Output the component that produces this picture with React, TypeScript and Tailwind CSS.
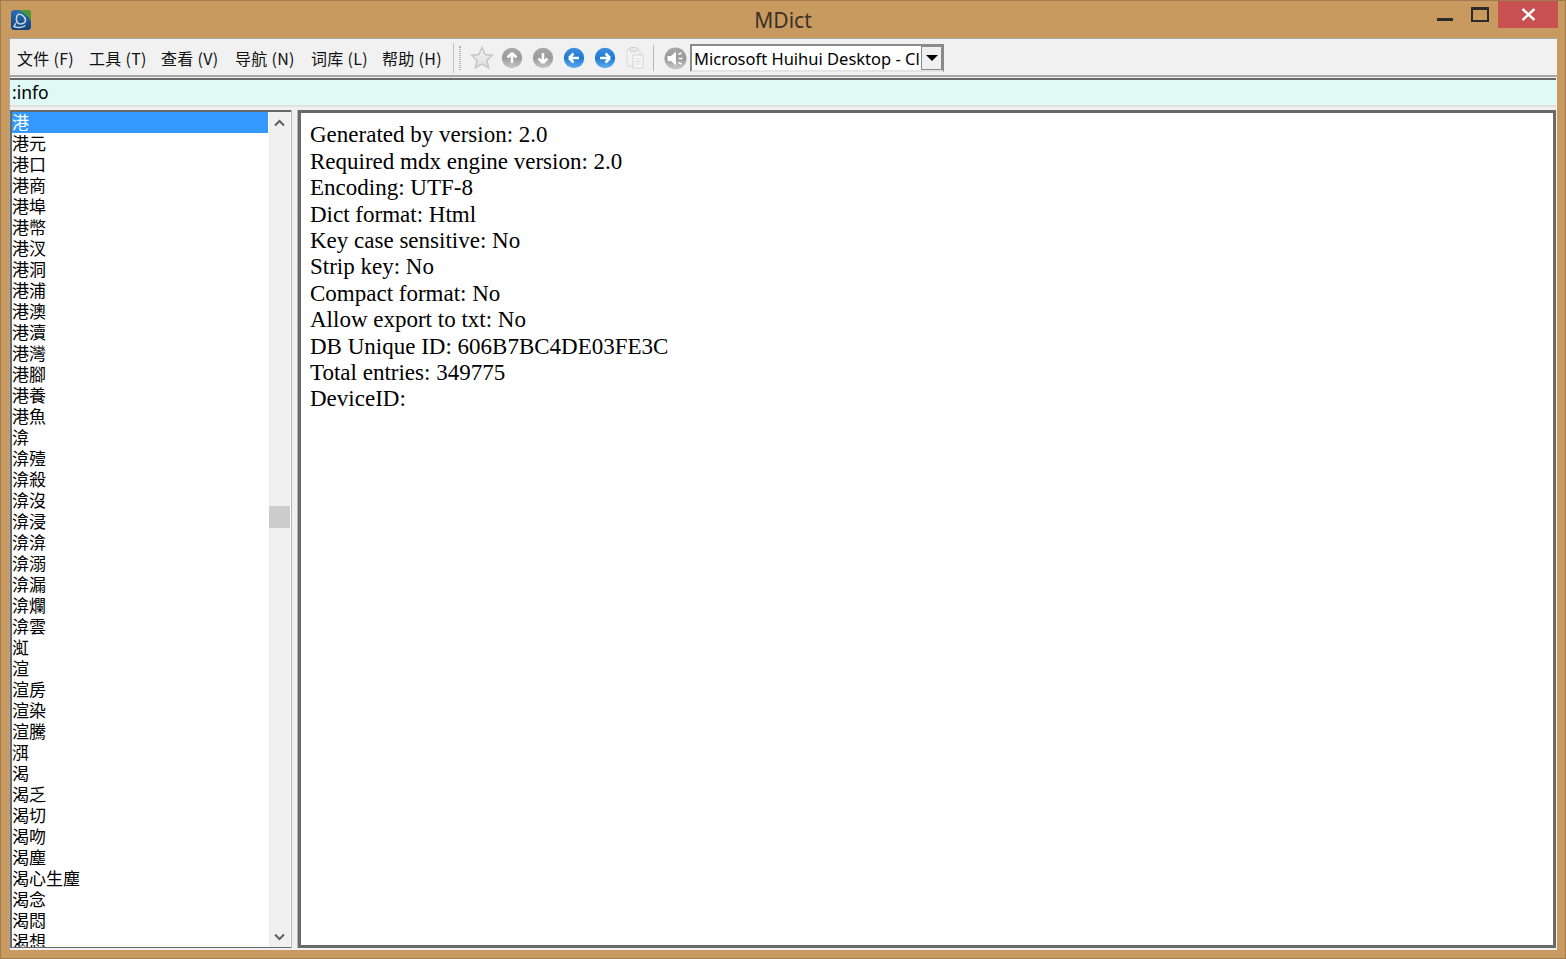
import React from "react";

const menus = [
  { label: "文件 (F)", width: "w-[72px]" },
  { label: "工具 (T)", width: "w-[72px]" },
  { label: "查看 (V)", width: "w-[74px]" },
  { label: "导航 (N)", width: "w-[76px]" },
  { label: "词库 (L)", width: "w-[71px]" },
  { label: "帮助 (H)", width: "w-[71px]" },
];

const words = [
  "港", "港元", "港口", "港商", "港埠", "港幣", "港汊", "港洞", "港浦", "港澳",
  "港瀆", "港灣", "港腳", "港養", "港魚", "渰", "渰殪", "渰殺", "渰沒", "渰浸",
  "渰渰", "渰溺", "渰漏", "渰爛", "渰雲", "渱", "渲", "渲房", "渲染", "渲騰",
  "渳", "渴", "渴乏", "渴切", "渴吻", "渴塵", "渴心生塵", "渴念", "渴悶", "渴想",
];

const info = [
  "Generated by version: 2.0",
  "Required mdx engine version: 2.0",
  "Encoding: UTF-8",
  "Dict format: Html",
  "Key case sensitive: No",
  "Strip key: No",
  "Compact format: No",
  "Allow export to txt: No",
  "DB Unique ID: 606B7BC4DE03FE3C",
  "Total entries: 349775",
  "DeviceID:",
];

const AppIcon = () => (
  <svg width="22" height="22" viewBox="0 0 22 22">
    <defs>
      <linearGradient id="appBg" x1="0" y1="0" x2="0" y2="1">
        <stop offset="0" stopColor="#2a6fb0" />
        <stop offset="1" stopColor="#123f78" />
      </linearGradient>
    </defs>
    <rect x="1" y="1" width="20" height="20" rx="3.5" fill="url(#appBg)" />
    <path d="M9 1h8.5a3.5 3.5 0 0 1 3.5 3.5V12C18 7 14 3.5 9 1z" fill="#4f9a2a" />
    <path
      d="M8 5.5C11 4 15.5 8 15.5 11.5c0 3-4.5 4-7 3C5.5 13 6 7 8 5.5zM6 14l-2 3.5c3 1.5 8 1.5 11.5-1"
      fill="none"
      stroke="#c7d6e6"
      strokeWidth="1.5"
    />
  </svg>
);

const RoundArrow = ({ id, dir, blue }: { id: string; dir: "up" | "down" | "left" | "right"; blue?: boolean }) => {
  const rotate = { up: 0, right: 90, down: 180, left: 270 }[dir];
  return (
    <svg width="22" height="22" viewBox="0 0 22 22">
      <defs>
        <linearGradient id={id} x1="0" y1="0" x2="0" y2="1">
          <stop offset="0" stopColor={blue ? "#3f8fe0" : "#a8a8a8"} />
          <stop offset="0.5" stopColor={blue ? "#1f78d2" : "#9a9a9a"} />
          <stop offset="1" stopColor={blue ? "#5fb0f0" : "#c8c8c8"} />
        </linearGradient>
      </defs>
      <circle cx="11" cy="11" r="10.2" fill={`url(#${id})`} />
      <g transform={`rotate(${rotate} 11 11)`}>
        <path d="M11 6L15.5 10.5M11 6L6.5 10.5M11 6.5V16" stroke="#fff" strokeWidth="2.6" fill="none" />
      </g>
    </svg>
  );
};

const Toolbar = () => (
  <div className="flex items-center">
    <div className="flex h-[30px] w-[8px] items-center border-l border-[#c0c0c0]">
      <div className="ml-[5px] h-[24px] w-[3px] border-x border-dotted border-[#b5b5b5]" />
    </div>
    <svg className="ml-[9px]" width="24" height="24" viewBox="0 0 24 24">
      <defs>
        <linearGradient id="starFill" x1="0" y1="0" x2="0" y2="1">
          <stop offset="0" stopColor="#f6f6f6" />
          <stop offset="1" stopColor="#dcdcdc" />
        </linearGradient>
      </defs>
      <path
        d="M12 1.5l3.1 7 7.4.7-5.6 5 1.7 7.6L12 18l-6.6 3.8 1.7-7.6-5.6-5 7.4-.7z"
        fill="url(#starFill)"
        stroke="#c4c4c4"
        strokeWidth="1.4"
      />
    </svg>
    <div className="ml-[7px] flex items-center gap-[9px]">
      <RoundArrow id="arrowUp" dir="up" />
      <RoundArrow id="arrowDown" dir="down" />
      <RoundArrow id="arrowLeft" dir="left" blue />
      <RoundArrow id="arrowRight" dir="right" blue />
    </div>
    <svg className="ml-[9px]" width="20" height="24" viewBox="0 0 20 24">
      <rect x="2" y="3" width="13" height="17" rx="1" fill="#f2f2f2" stroke="#d8d8d8" />
      <rect x="5" y="1.5" width="7" height="4" rx="1" fill="#e8e8e8" stroke="#d0d0d0" />
      <rect x="8" y="9" width="10" height="13" fill="#f8f8f8" stroke="#d4d4d4" />
      <path d="M10 13h6M10 15.5h6M10 18h6" stroke="#d8d8d8" />
    </svg>
    <div className="ml-[8px] h-[26px] w-px bg-[#b8b8b8]" />
    <svg className="ml-[10px]" width="23" height="23" viewBox="0 0 23 23">
      <defs>
        <linearGradient id="speakerBg" x1="0" y1="0" x2="0" y2="1">
          <stop offset="0" stopColor="#a8a8a8" />
          <stop offset="0.5" stopColor="#989898" />
          <stop offset="1" stopColor="#cccccc" />
        </linearGradient>
      </defs>
      <circle cx="11.5" cy="11.5" r="11" fill="url(#speakerBg)" />
      <path d="M3.5 9h3.5l5-4.5v14L7 14H3.5z" fill="#fff" />
      <path d="M14.5 7.5l3-1.5M14.5 11.5h4M14.5 15.5l3 1.5" stroke="#fff" strokeWidth="1.6" />
    </svg>
    <div className="ml-[3px] flex h-[28px] w-[254px] items-center border-2 border-[#8a8a8a] border-b-[#e4e4e4] bg-white">
      <span className="w-[229px] overflow-hidden whitespace-nowrap pl-[2px] pt-px font-['Noto_Sans','DejaVu_Sans',sans-serif] text-[16.5px] leading-[24px] text-black">
        Microsoft Huihui Desktop - Cl
      </span>
      <div className="flex h-[24px] w-[21px] items-center justify-center border border-[#8a8a8a] bg-[#f0f0f0]">
        <div className="h-0 w-0 border-x-[6px] border-t-[6px] border-x-transparent border-t-black" />
      </div>
    </div>
  </div>
);

const WordList = () => (
  <div className="flex w-[281px] shrink-0 border-t-2 border-l-2 border-b border-[#696969] bg-white">
    <div className="w-[256px] overflow-hidden font-['Noto_Sans_CJK_TC','Noto_Sans_CJK_SC',sans-serif] text-[17px] leading-[19px] text-black">
      {words.map((w, i) => (
        <div key={i} className={i === 0 ? "h-[21px] bg-[#3399ff] text-white" : "h-[21px]"}>
          {w}
        </div>
      ))}
    </div>
    <div className="ml-px flex w-[21px] flex-col items-center bg-[#f0f0f0]">
      <svg className="mt-[7px]" width="11" height="8" viewBox="0 0 11 8">
        <path d="M1 6.5l4.5-4.5 4.5 4.5" fill="none" stroke="#5f5f5f" strokeWidth="2" />
      </svg>
      <div className="mt-[379px] h-[22px] w-full bg-[#cdcdcd]" />
      <svg className="mt-[405px]" width="11" height="8" viewBox="0 0 11 8">
        <path d="M1 1.5l4.5 4.5 4.5-4.5" fill="none" stroke="#5f5f5f" strokeWidth="2" />
      </svg>
    </div>
  </div>
);

export default function App() {
  return (
    <div className="flex h-[959px] w-[1566px] flex-col overflow-hidden border border-[#a07c50] bg-[#c89a60] font-['Liberation_Sans',sans-serif]">
      {/* title bar */}
      <div className="flex h-[37px] shrink-0 items-start">
        <div className="flex w-[300px] pl-[9px] pt-[8px]">
          <AppIcon />
        </div>
        <div className="flex-1 pt-[5px] text-center font-['Noto_Sans',sans-serif] text-[21px] leading-[28px] text-[#3b3126]">
          MDict
        </div>
        <div className="flex w-[300px] justify-end pr-[7px]">
          <div className="mr-[18px] mt-[17px] h-[3px] w-[16px] bg-[#2b2b2b]" />
          <div className="mr-[9px] mt-[6px] h-[15px] w-[18px] border-2 border-t-[3px] border-[#2b2b2b]" />
          <div className="flex h-[27px] w-[60px] items-center justify-center bg-[#c75050]">
            <svg width="15" height="13" viewBox="0 0 15 13">
              <path d="M1.5 1l12 11M13.5 1l-12 11" stroke="#fff" strokeWidth="2.4" />
            </svg>
          </div>
        </div>
      </div>

      {/* client area */}
      <div className="mx-[8px] mb-[8px] flex min-h-0 flex-1 flex-col border-t border-l border-[#a8a8a8] bg-[#f0f0f0]">
        <div className="flex h-[38px] shrink-0 items-center border-b-2 border-[#a6a6a6] bg-[#f1f1f2] pl-[7px] pt-[2px]">
          <div className="flex font-['Noto_Sans_CJK_SC',sans-serif] text-[16px] leading-[22px] tracking-[0.3px] text-[#111]">
            {menus.map((m) => (
              <span key={m.label} className={`${m.width} whitespace-pre`}>
                {m.label}
              </span>
            ))}
          </div>
          <Toolbar />
        </div>

        <div className="mr-px mt-px h-[29px] shrink-0 border-t-2 border-b-2 border-t-[#696969] border-b-[#e0e0e0] bg-[#e0f9f5] pl-[2px] font-['Noto_Sans','DejaVu_Sans',sans-serif] text-[17.5px] leading-[25px] text-black">
          :info
        </div>

        <div className="mt-[3px] flex min-h-0 flex-1 pb-[2px]">
          <WordList />
          <div className="w-[7px] shrink-0 border-x border-[#b5b5b5] bg-[#f0f0f0]" />
          <div className="mr-px flex-1 border-[3px] border-[#696969] bg-white pl-[9px] pt-[9.3px] font-['Liberation_Serif',serif] text-[23px] leading-[26.4px] text-black">
            {info.map((line) => (
              <div key={line}>{line}</div>
            ))}
          </div>
        </div>
      </div>
    </div>
  );
}
